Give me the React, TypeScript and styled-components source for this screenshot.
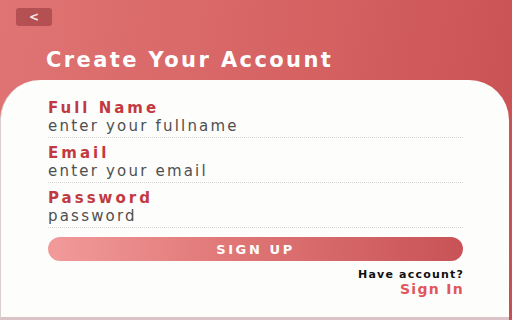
import styled, { createGlobalStyle } from "styled-components";

const GlobalStyle = createGlobalStyle`
  html, body {
    margin: 0;
    padding: 0;
  }
  body {
    font-family: "DejaVu Sans", Verdana, sans-serif;
  }
`;

const Screen = styled.div`
  width: 512px;
  height: 320px;
  display: flex;
  flex-direction: column;
  background: linear-gradient(100deg, #e07474 0%, #d66262 55%, #c75053 100%);
  overflow: hidden;
  box-sizing: border-box;
`;

const Header = styled.div`
  height: 80px;
  padding: 8px 0 0 16px;
  box-sizing: border-box;
  display: flex;
  flex-direction: column;
`;

const BackButton = styled.button`
  width: 36px;
  height: 18px;
  border: 0;
  border-radius: 3px;
  background: rgba(130, 40, 45, 0.45);
  color: #f6e6e6;
  font-family: "DejaVu Sans", sans-serif;
  font-weight: bold;
  font-size: 12px;
  line-height: 18px;
  padding: 0;
  cursor: pointer;
`;

const Title = styled.h1`
  margin: 22px 0 0 30px;
  color: #fff;
  font-size: 21px;
  font-weight: bold;
  letter-spacing: 2.4px;
  line-height: 24px;
`;

const Card = styled.div`
  flex: 1;
  margin-right: 3px;
  background: #fdfdfb;
  border-radius: 40px 40px 0 0;
  border-left: 1px solid #d8d0d0;
  border-bottom: 3px solid #d9c3c6;
  padding: 19px 46px 0 47px;
  box-sizing: border-box;
  display: flex;
  flex-direction: column;
`;

const Field = styled.div`
  display: flex;
  flex-direction: column;
  height: 39px;
  border-bottom: 1px dotted #d6d6d6;
  box-sizing: border-box;
  margin-bottom: 6px;
`;

const Label = styled.label`
  color: #c13a40;
  font-weight: bold;
  font-size: 15px;
  letter-spacing: 3px;
  line-height: 18px;
`;

const Input = styled.input`
  border: 0;
  outline: none;
  background: transparent;
  padding: 0;
  height: 17px;
  font-family: "DejaVu Sans", sans-serif;
  font-size: 15px;
  letter-spacing: 2.2px;
  color: #555;
  &::placeholder {
    color: #4f4f4f;
  }
`;

const SubmitButton = styled.button`
  margin-top: 3px;
  height: 24px;
  border: 0;
  border-radius: 12px;
  background: linear-gradient(90deg, #f29a9a 0%, #e07676 45%, #c85356 100%);
  color: #fff;
  font-family: "DejaVu Sans", sans-serif;
  font-weight: bold;
  font-size: 13px;
  letter-spacing: 2.6px;
  cursor: pointer;
`;

const Footer = styled.div`
  display: flex;
  flex-direction: column;
  align-items: flex-end;
  margin-top: 7px;
`;

const Hint = styled.span`
  font-size: 11px;
  line-height: 13px;
  font-weight: bold;
  letter-spacing: 1.2px;
  margin-right: -1px;
  color: #111;
`;

const SignIn = styled.a`
  font-size: 14px;
  line-height: 17px;
  font-weight: bold;
  letter-spacing: 1.3px;
  margin-right: -1px;
  color: #e0575e;
  cursor: pointer;
`;

export default function App() {
  return (
    <>
      <GlobalStyle />
      <Screen>
        <Header>
          <BackButton>&lt;</BackButton>
          <Title>Create Your Account</Title>
        </Header>
        <Card>
          <Field>
            <Label>Full Name</Label>
            <Input placeholder="enter your fullname" />
          </Field>
          <Field>
            <Label>Email</Label>
            <Input placeholder="enter your email" />
          </Field>
          <Field>
            <Label>Password</Label>
            <Input type="text" placeholder="password" />
          </Field>
          <SubmitButton>SIGN UP</SubmitButton>
          <Footer>
            <Hint>Have account?</Hint>
            <SignIn>Sign In</SignIn>
          </Footer>
        </Card>
      </Screen>
    </>
  );
}
